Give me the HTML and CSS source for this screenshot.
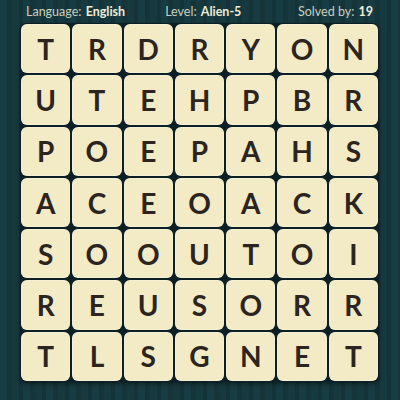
FILE: index.html
```html
<!DOCTYPE html>
<html>
<head>
<meta charset="utf-8">
<link rel="stylesheet" href="styles.css">
</head>
<body>
<div class="page">
  <div class="header">
    <span class="item">Language: <b>English</b></span>
    <span class="item level">Level: <b>Alien-5</b></span>
    <span class="item solved">Solved by: <b>19</b></span>
  </div>
  <div class="board">
    <div class="tile">T</div><div class="tile">R</div><div class="tile">D</div><div class="tile">R</div><div class="tile">Y</div><div class="tile">O</div><div class="tile">N</div>
    <div class="tile">U</div><div class="tile">T</div><div class="tile">E</div><div class="tile">H</div><div class="tile">P</div><div class="tile">B</div><div class="tile">R</div>
    <div class="tile">P</div><div class="tile">O</div><div class="tile">E</div><div class="tile">P</div><div class="tile">A</div><div class="tile">H</div><div class="tile">S</div>
    <div class="tile">A</div><div class="tile">C</div><div class="tile">E</div><div class="tile">O</div><div class="tile">A</div><div class="tile">C</div><div class="tile">K</div>
    <div class="tile">S</div><div class="tile">O</div><div class="tile">O</div><div class="tile">U</div><div class="tile">T</div><div class="tile">O</div><div class="tile">I</div>
    <div class="tile">R</div><div class="tile">E</div><div class="tile">U</div><div class="tile">S</div><div class="tile">O</div><div class="tile">R</div><div class="tile">R</div>
    <div class="tile">T</div><div class="tile">L</div><div class="tile">S</div><div class="tile">G</div><div class="tile">N</div><div class="tile">E</div><div class="tile">T</div>
  </div>
</div>
</body>
</html>
```
FILE: styles.css
```css
html, body {
  margin: 0;
  padding: 0;
}
body {
  width: 400px;
  height: 400px;
  overflow: hidden;
  background-color: #173a40;
  background-image: repeating-linear-gradient(90deg, #183c43 0 7px, #15353b 7px 12px, #173a40 12px 19px, #14343a 19px 23px);
  font-family: Lato, "Liberation Sans", sans-serif;
}
.page {
  display: flex;
  flex-direction: column;
  align-items: flex-start;
}
.header {
  box-sizing: border-box;
  width: 400px;
  height: 23px;
  padding: 0 27px 0 26px;
  display: flex;
  align-items: center;
  font-size: 12.5px;
  color: #c9cfbf;
}
.header b {
  font-weight: 700;
  color: #efebd6;
  margin-left: 1px;
}
.level {
  margin-left: 40px;
}
.solved {
  margin-left: auto;
}
.board {
  margin-left: 20px;
  width: 357px;
  padding: 1px;
  display: grid;
  grid-template-columns: repeat(7, 1fr);
  grid-auto-rows: 49.3px;
  gap: 2px;
  background: #0b1f24;
  border-radius: 6px;
  box-shadow: 0 2px 5px rgba(0, 0, 0, 0.45);
}
.tile {
  background: #f2ebc6;
  border-radius: 6px;
  display: flex;
  align-items: center;
  justify-content: center;
  font-size: 28px;
  font-weight: 700;
  color: #2b2420;
  box-shadow: inset 0 0 0 1px rgba(255, 255, 255, 0.25);
}
```
